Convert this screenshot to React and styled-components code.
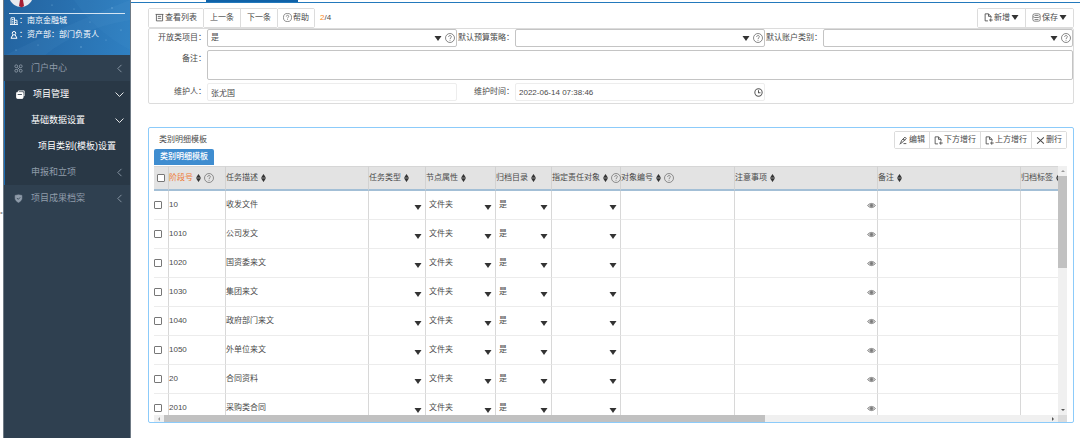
import React from "react";
import styled, { createGlobalStyle } from "styled-components";

const GlobalStyle = createGlobalStyle`
  * { box-sizing: border-box; }
  body {
    margin: 0;
    background: #fff;
    color: #4a4a4a;
    font-family: "Liberation Sans", "Noto Sans CJK SC", sans-serif;
    font-size: 8px;
    line-height: 12px;
  }
  button, input, select, textarea { font: inherit; color: inherit; margin: 0; }
  svg { display: block; flex: none; }
`;

/* ---------- icons ---------- */

const Icon = ({ size = 9, children, width = 1 }) => (
  <svg width={size} height={size} viewBox="0 0 16 16" fill="none" stroke="currentColor" strokeWidth={width} aria-hidden="true">
    {children}
  </svg>
);

const HelpIcon = ({ size = 10 }) => (
  <Icon size={size} width={1.1}>
    <circle cx="8" cy="8" r="7.200" />
    <path d="M5.800 6.300c0-3 4.400-2.900 4.400-.3 0 1.700-2.200 1.700-2.200 3.700M8 11v1.400" />
  </Icon>
);
const ListIcon = () => (
  <Icon width={1.4}>
    <path d="M1 2.500h14M2.500 2.500v11.500h11V2.500M5 6h6M5 9.500h6" />
  </Icon>
);
const FileAddIcon = () => (
  <Icon width={1.5}>
    <path d="M7 14H2V1.500h6l4.500 4.500v3M8 1.500V6h4.500M9 12.500h6.500M12 9.500v6" />
  </Icon>
);
const SaveIcon = () => (
  <Icon width={1.2}>
    <rect x="1.500" y="1.500" width="13" height="13" rx="3" />
    <path d="M2 6.500l3 1.500h6l3-1.500M4.500 4.500h7M4.500 11.500h7" />
  </Icon>
);
const EditIcon = () => (
  <Icon width={1.6}>
    <path d="M1 14.500l4-2.500 8-7.500-2.500-2.500L4.500 8 3 12.500M7 6l4 1.500M8 13.500h5" />
  </Icon>
);
const CrossIcon = () => (
  <Icon width={1.8}>
    <path d="M2 2.500l12 11M14 2.500l-12 11" />
  </Icon>
);
const ClockIcon = () => (
  <Icon size={9} width={1.8}>
    <circle cx="8" cy="8" r="6.500" />
    <path d="M8 4v4.500h3.500" />
  </Icon>
);
const EyeIcon = () => (
  <Icon size={9} width={1.4}>
    <path d="M1 8c3.500-5 10.500-5 14 0-3.500 5-10.500 5-14 0z" fill="#ccc" />
    <circle cx="8" cy="8" r="2.200" fill="currentColor" />
  </Icon>
);
const Caret = ({ width = 8, height = 5 }) => (
  <svg width={width} height={height} viewBox="0 0 8 5" fill="#333" aria-hidden="true">
    <path d="M0.500 0h7L4 5z" />
  </svg>
);
const SortIcon = () => (
  <svg width="5" height="8" viewBox="0 0 5 8" fill="#333" aria-hidden="true">
    <path d="M2.500 0L5 3.700H0zM2.500 8L5 4.300H0z" />
  </svg>
);
const Chevron = ({ open }) => (
  <Icon size={9} width={1.6}>
    <path d={open ? "M1 4.500l7 7 7-7" : "M11.500 1.500L5 8l6.500 6.500"} />
  </Icon>
);
const PortalIcon = () => (
  <Icon width={1.5}>
    <circle cx="4" cy="4" r="2.500" /><circle cx="12" cy="4" r="2.500" />
    <circle cx="4" cy="12" r="2.500" /><circle cx="12" cy="12" r="2.500" />
    <path d="M6 6l4 4M10 6l-4 4" />
  </Icon>
);
const FolderIcon = () => (
  <Icon width={1.5}>
    <path d="M4.500 4V1.500h10v9H13" />
    <rect x="1" y="4" width="11.500" height="11" rx="1.500" fill="currentColor" />
    <path d="M3 8h7.500" stroke="#293846" />
  </Icon>
);
const ShieldIcon = () => (
  <Icon>
    <path d="M2 2.500l6-1 6 1v5c0 3.500-3 6-6 7.500-3-1.500-6-4-6-7.500z" fill="currentColor" />
    <path d="M5 7l2.500 2.500L11 6" stroke="#2f4050" strokeWidth="1.500" />
  </Icon>
);
const BuildingIcon = () => (
  <Icon size={8} width={1.8}>
    <path d="M2 15V1.500h7V15M9 6.500h5V15M0 15h16M4 5h3M4 8.500h3M4 12h3M11.500 10v2" />
  </Icon>
);
const UserIcon = () => (
  <Icon size={8} width={2}>
    <circle cx="8" cy="4.500" r="3.500" />
    <path d="M5.500 8L2 14.500h12L10.500 8" />
  </Icon>
);

/* ---------- sidebar ---------- */

const Page = styled.div`
  display: flex;
  min-height: 100vh;
`;
const Gutter = styled.div`
  width: 3px;
  display: flex;
  align-items: center;
  padding-bottom: 12px;
  color: #999;
`;
const Sidebar = styled.aside`
  width: 128px;
  flex: none;
  background: #2f4050;
  border: solid #6f7a85;
  border-width: 0 1px;
`;
const Profile = styled.div`
  position: relative;
  height: 55px;
  padding: 0 5px;
  color: #fff;
  overflow: hidden;
  background: linear-gradient(100deg, #23639f 0%, #286fae 45%, #2f80c2 100%);
`;
const Stars = styled.svg`
  position: absolute;
  inset: 0;
`;
const ProfileHead = styled.div`
  position: relative;
  height: 14px;
  border-bottom: 1px solid #d5e5f3;
`;
const ProfileLine = styled.div`
  position: relative;
  display: flex;
  align-items: center;
  gap: 1px;
  height: 14px;
  padding-left: 1px;
`;
const MenuGroup = styled.div`
  background: #293846;
  border-left: 1px solid #1a6db5;
`;
const MenuItem = styled.a`
  display: flex;
  align-items: center;
  height: 26px;
  padding: 0 6px 0 ${(p) => p.$indent}px;
  gap: 8px;
  font-size: 9px;
  color: ${(p) => (p.$active ? "#fff" : "#8f9caa")};
  text-decoration: none;
  white-space: nowrap;
  span { flex: 1; }
`;

const Nav = () => (
  <Sidebar>
    <Profile>
      <Stars width="126" height="56" viewBox="0 0 126 56" aria-hidden="true">
        <path d="M0 56Q50 30 126 0v20Q70 30 40 56z" fill="#6fb4e6" opacity=".08" />
        <path d="M70 0Q90 30 126 50V0z" fill="#58a6df" opacity=".08" />
        <g fill="#9fd0f3" opacity=".6">
          <circle cx="48" cy="5" r=".6" /><circle cx="70" cy="9" r=".5" /><circle cx="108" cy="8" r=".7" />
          <circle cx="86" cy="22" r=".5" /><circle cx="117" cy="30" r=".6" /><circle cx="102" cy="40" r=".5" />
          <circle cx="77" cy="47" r=".7" /><circle cx="34" cy="45" r=".5" /><circle cx="12" cy="50" r=".6" />
        </g>
      </Stars>
      <ProfileHead>
        <svg width="24" height="8" viewBox="0 0 24 8" aria-hidden="true">
          <path d="M1 0h22c-2 4-6 7-11 7S3 4 1 0z" fill="#e9e9ee" />
          <path d="M11 0h3l1 6-2.500 1.500L10 6z" fill="#a51f35" />
        </svg>
      </ProfileHead>
      <ProfileLine><BuildingIcon /><span>：南京金融城</span></ProfileLine>
      <ProfileLine><UserIcon /><span>：资产部：部门负责人</span></ProfileLine>
    </Profile>
    <nav>
      <MenuItem href="#portal" $indent={10}><PortalIcon /><span>门户中心</span><Chevron /></MenuItem>
      <MenuGroup>
        <MenuItem href="#project" $active $indent={11}><FolderIcon /><span>项目管理</span><Chevron open /></MenuItem>
        <MenuItem href="#base" $active $indent={26}><span>基础数据设置</span><Chevron open /></MenuItem>
        <MenuItem href="#template" $active $indent={33}><span>项目类别(模板)设置</span></MenuItem>
        <MenuItem href="#apply" $indent={26}><span>申报和立项</span><Chevron /></MenuItem>
      </MenuGroup>
      <MenuItem href="#archive" $indent={10}><ShieldIcon /><span>项目成果档案</span><Chevron /></MenuItem>
    </nav>
  </Sidebar>
);

/* ---------- main area ---------- */

const Main = styled.main`
  flex: 1;
  min-width: 0;
  height: 100vh;
  display: flex;
  flex-direction: column;
`;
const TabStrip = styled.div`
  height: 3px;
  flex: none;
  border-bottom: 1px solid #2379bc;
  padding-left: 75px;
`;
const CurrentTab = styled.div`
  width: 92px;
  height: 2px;
  background: #0f62a8;
`;
const Content = styled.div`
  flex: 1;
  min-height: 0;
  display: flex;
  flex-direction: column;
  padding: 5px 6px 15px 17px;
`;
const Toolbar = styled.div`
  display: flex;
  align-items: center;
  height: 19px;
  flex: none;
`;
const ButtonGroup = styled.div`
  display: flex;
  border: 1px solid #dcdcdc;
  border-radius: 2px;
  margin-left: ${(p) => (p.$joined ? "-1px" : p.$end ? "auto" : "0")};
`;
const ToolButton = styled.button`
  display: flex;
  align-items: center;
  justify-content: center;
  gap: 1px;
  height: ${(p) => (p.$small ? 16 : 18)}px;
  padding: 0 ${(p) => (p.$small ? 4 : p.$help ? 5 : 6)}px;
  border: 0;
  border-left: ${(p) => (p.$divided ? "1px solid #dcdcdc" : "0")};
  background: #fff;
  white-space: nowrap;
`;
const Counter = styled.div`
  margin-left: 5px;
  b { font-weight: 400; color: #f98a1c; }
`;
const Form = styled.form`
  flex: none;
  display: grid;
  grid-template-columns: repeat(3, 58px 1fr);
  row-gap: 3px;
  margin-top: 1px;
  padding-bottom: 2px;
  border: 1px solid #dcdcdc;
  border-radius: 2px;
`;
const Label = styled.label`
  height: 18px;
  line-height: 18px;
  padding-right: 1px;
  text-align: right;
  white-space: nowrap;
`;
const Field = styled.div`
  position: relative;
  height: ${(p) => (p.$tall ? 30 : 18)}px;
  grid-column: span ${(p) => p.$span || 1};
  border: 1px solid ${(p) => (p.$readOnly ? "#ededed" : "#c4c4c4")};
  border-radius: 2px;
`;
const Control = styled.input`
  display: block;
  width: 100%;
  height: 100%;
  padding: 0 3px;
  border: 0;
  outline: 0;
  background: transparent;
  appearance: none;
  resize: none;
`;
const Marks = styled.div`
  position: absolute;
  right: 1px;
  top: 0;
  bottom: 0;
  display: flex;
  align-items: center;
  gap: 3px;
  pointer-events: none;
  color: #555;
`;

const SelectField = ({ id, label, value }) => (
  <>
    <Label htmlFor={id}>{label}</Label>
    <Field>
      <Control as="select" id={id} defaultValue={value}><option>{value}</option></Control>
      <Marks><Caret /><HelpIcon /></Marks>
    </Field>
  </>
);

/* ---------- detail panel ---------- */

const Panel = styled.section`
  flex: 1;
  min-height: 0;
  display: flex;
  flex-direction: column;
  margin-top: 23px;
  padding: 3px 6px 0 5px;
  border: 1px solid #8ccbfa;
  border-radius: 2px;
`;
const PanelHead = styled.div`
  display: flex;
  align-items: center;
  height: 18px;
  flex: none;
  padding-left: 5px;
`;
const PanelTitle = styled.h2`
  margin: 0;
  font-size: 8px;
  font-weight: 400;
`;
const PanelTab = styled.button`
  align-self: flex-start;
  flex: none;
  height: 16px;
  padding: 0 6px;
  border: 0;
  border-radius: 2px 2px 0 0;
  background: #3f8dd0;
  color: #fff;
  font-weight: 500;
`;
const GridArea = styled.div`
  flex: 1;
  min-height: 0;
  display: grid;
  grid-template-columns: 1fr 9px;
  grid-template-rows: 1fr 7px;
  margin-top: 1px;
`;
const Viewport = styled.div`
  overflow: hidden;
  min-width: 0;
  min-height: 0;
`;
const Table = styled.table`
  table-layout: fixed;
  width: 923px;
  border-collapse: separate;
  border-spacing: 0;
`;
const HeadCell = styled.th`
  height: 25px;
  padding: 0;
  background: #e3e3e3;
  border-top: 1px solid #d6d6d6;
  border-bottom: 2px solid #a3bfd6;
  border-left: ${(p) => (p.$first ? "0" : "1px solid #d2d2d2")};
  font-weight: 400;
  text-align: left;
  white-space: nowrap;
`;
const HeadContent = styled.div`
  display: flex;
  align-items: center;
  gap: 3px;
  color: ${(p) => (p.$key ? "#ee7a35" : "inherit")};
  svg { color: #666; }
`;
const Cell = styled.td`
  position: relative;
  height: 29px;
  padding: 0;
  border-bottom: 1px solid #ececec;
  border-left: ${(p) => (p.$first ? "0" : "1px solid #d8d8d8")};
`;
const Check = styled.input`
  display: block;
  appearance: none;
  width: 8px;
  height: 8px;
  margin: ${(p) => (p.$head ? "0 0 0 3px" : "0")};
  border: 1px solid #777;
  border-radius: 1px;
  background: #fff;
`;
const CellSelect = styled.select`
  display: block;
  width: 100%;
  height: 20px;
  padding: 0 3px;
  border: 0;
  background: transparent;
  appearance: none;
`;
const CellCaret = styled.div`
  position: absolute;
  right: 3px;
  top: 14px;
  pointer-events: none;
`;
const EyeButton = styled.button`
  display: block;
  margin-left: auto;
  padding: 0 1px;
  border: 0;
  background: transparent;
  color: #777;
`;
const ScrollBar = styled.div`
  display: flex;
  flex-direction: ${(p) => (p.$vertical ? "column" : "row")};
  background: #f0f0f0;
`;
const ScrollEnd = styled.div`
  flex: none;
  display: flex;
  align-items: center;
  justify-content: center;
  width: ${(p) => (p.$vertical ? 9 : 10)}px;
  height: ${(p) => (p.$vertical ? 10 : 7)}px;
`;
const ScrollTrack = styled.div`
  flex: 1;
`;
const ScrollThumb = styled.div`
  background: #c1c1c1;
  width: ${(p) => (p.$vertical ? "100%" : "68%")};
  height: ${(p) => (p.$vertical ? "40%" : "100%")};
`;
const Corner = styled.div`
  background: #dcdcdc;
`;
const Arrow = ({ d, color = "#555" }) => (
  <svg width="4" height="4" viewBox="0 0 4 4" fill={color} aria-hidden="true"><path d={d} /></svg>
);

const columns = [
  { title: "阶段号", width: 57, key: true, help: true },
  { title: "任务描述", width: 143 },
  { title: "任务类型", width: 57 },
  { title: "节点属性", width: 70 },
  { title: "归档目录", width: 56 },
  { title: "指定责任对象", width: 69, help: true },
  { title: "对象编号", width: 114, help: true },
  { title: "注意事项", width: 143 },
  { title: "备注", width: 143 },
  { title: "归档标签", width: 57 },
];

const rows = [
  ["10", "收发文件"],
  ["1010", "公司发文"],
  ["1020", "国资委来文"],
  ["1030", "集团来文"],
  ["1040", "政府部门来文"],
  ["1050", "外单位来文"],
  ["20", "合同资料"],
  ["2010", "采购类合同"],
];

const SelectCell = ({ value, label }) => (
  <Cell>
    <CellSelect aria-label={label} defaultValue={value}><option>{value}</option></CellSelect>
    <CellCaret><Caret /></CellCaret>
  </Cell>
);

export default function App() {
  return (
    <Page>
      <GlobalStyle />
      <Gutter>•</Gutter>
      <Nav />
      <Main>
        <TabStrip><CurrentTab /></TabStrip>
        <Content>
          <Toolbar>
            <ButtonGroup><ToolButton><ListIcon />查看列表</ToolButton></ButtonGroup>
            <ButtonGroup $joined>
              <ToolButton>上一条</ToolButton>
              <ToolButton $divided>下一条</ToolButton>
            </ButtonGroup>
            <ButtonGroup $joined><ToolButton $help><HelpIcon size={9} />帮助</ToolButton></ButtonGroup>
            <Counter><b>2</b>/4</Counter>
            <ButtonGroup $end>
              <ToolButton><FileAddIcon />新增<Caret /></ToolButton>
              <ToolButton $divided><SaveIcon />保存<Caret /></ToolButton>
            </ButtonGroup>
          </Toolbar>
          <Form>
            <SelectField id="open" label="开放类项目：" value="是" />
            <SelectField id="budget" label="默认预算策略：" value="" />
            <SelectField id="account" label="默认账户类别：" value="" />
            <Label htmlFor="remark">备注：</Label>
            <Field $tall $span={5}><Control as="textarea" id="remark" /></Field>
            <Label htmlFor="keeper">维护人：</Label>
            <Field $readOnly><Control id="keeper" readOnly value="张尤国" /></Field>
            <Label htmlFor="time">维护时间：</Label>
            <Field $readOnly>
              <Control id="time" readOnly value="2022-06-14 07:38:46" />
              <Marks><ClockIcon /></Marks>
            </Field>
          </Form>
          <Panel>
            <PanelHead>
              <PanelTitle>类别明细模板</PanelTitle>
              <ButtonGroup $end>
                <ToolButton $small><EditIcon />编辑</ToolButton>
                <ToolButton $small $divided><FileAddIcon />下方增行</ToolButton>
                <ToolButton $small $divided><FileAddIcon />上方增行</ToolButton>
                <ToolButton $small $divided><CrossIcon />删行</ToolButton>
              </ButtonGroup>
            </PanelHead>
            <PanelTab>类别明细模板</PanelTab>
            <GridArea>
              <Viewport>
                <Table>
                  <colgroup>
                    <col width="14" />
                    {columns.map((c) => <col key={c.title} width={c.width} />)}
                  </colgroup>
                  <thead>
                    <tr>
                      <HeadCell $first><Check $head type="checkbox" aria-label="全选" /></HeadCell>
                      {columns.map((c) => (
                        <HeadCell key={c.title}>
                          <HeadContent $key={c.key}>
                            {c.title}<SortIcon />{c.help && <HelpIcon />}
                          </HeadContent>
                        </HeadCell>
                      ))}
                    </tr>
                  </thead>
                  <tbody>
                    {rows.map(([code, name]) => (
                      <tr key={code}>
                        <Cell $first><Check type="checkbox" aria-label={code} /></Cell>
                        <Cell>{code}</Cell>
                        <Cell>{name}</Cell>
                        <SelectCell label="任务类型" value="" />
                        <SelectCell label="节点属性" value="文件夹" />
                        <SelectCell label="归档目录" value="是" />
                        <SelectCell label="指定责任对象" value="" />
                        <Cell />
                        <Cell><EyeButton aria-label="查看"><EyeIcon /></EyeButton></Cell>
                        <Cell />
                        <Cell />
                      </tr>
                    ))}
                  </tbody>
                </Table>
              </Viewport>
              <ScrollBar $vertical>
                <ScrollEnd $vertical><Arrow color="#999" d="M0 3h4L2 1z" /></ScrollEnd>
                <ScrollTrack><ScrollThumb $vertical /></ScrollTrack>
                <ScrollEnd $vertical><Arrow d="M0 1h4L2 3z" /></ScrollEnd>
              </ScrollBar>
              <ScrollBar>
                <ScrollEnd><Arrow color="#999" d="M3 0v4L1 2z" /></ScrollEnd>
                <ScrollTrack><ScrollThumb /></ScrollTrack>
                <ScrollEnd><Arrow d="M1 0v4l2-2z" /></ScrollEnd>
              </ScrollBar>
              <Corner />
            </GridArea>
          </Panel>
        </Content>
      </Main>
    </Page>
  );
}
